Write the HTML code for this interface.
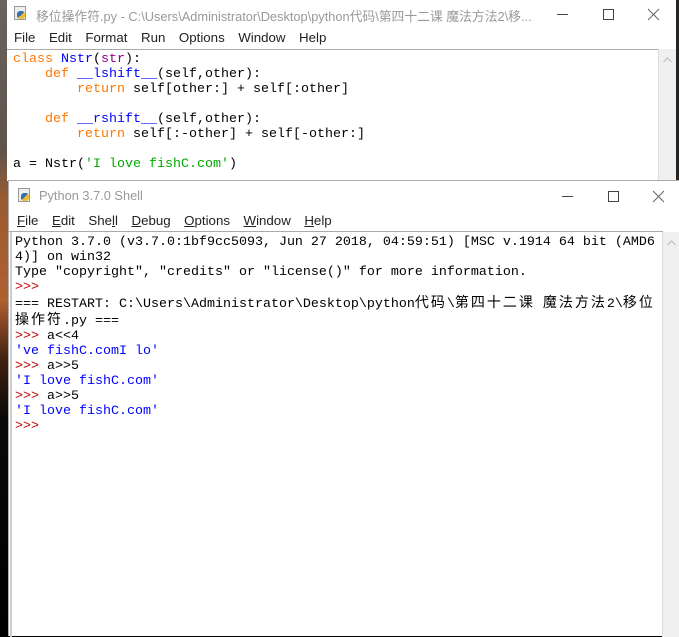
<!DOCTYPE html>
<html><head><meta charset="utf-8"><style>
*{margin:0;padding:0;box-sizing:border-box}
body{width:679px;height:636px;position:relative;overflow:hidden;background:#000;font-family:"Liberation Sans","Noto Sans CJK SC",sans-serif}
.desk{position:absolute;left:0;top:0;width:8px;height:636px;background:linear-gradient(#6a625c 0,#5e544c 150px,#9a5a30 200px,#b06030 300px,#402010 360px,#080808 420px,#000 636px)}
.dr{position:absolute;left:676px;top:0;width:3px;height:181px;background:#2a2420}
.w1{position:absolute;left:7px;top:0;width:669px;height:181px;background:#fff}
.w2{position:absolute;left:8px;top:180px;width:671px;height:456px;background:#fff;border-left:1px solid #aaa;border-top:1px solid #aaa}
.title{position:absolute;font-size:12.8px;color:#999;white-space:nowrap}
.menu{position:absolute;font-size:13.3px;color:#222;white-space:nowrap}
.menu span{margin-right:13.5px}
.code{position:absolute;font-family:"Liberation Mono","Noto Sans CJK SC",monospace;font-size:13.33px;line-height:15px;white-space:pre;color:#000}
.k{color:#ff7700}.d{color:#0000ff}.b{color:#900090}.s{color:#00aa00}.p{color:#c00000}.o{color:#0000ff}
.c{display:inline-block;width:16px;font-family:"Noto Sans CJK SC",sans-serif;font-size:14px;line-height:15px}
.sb{position:absolute;background:#f0f0f0;border-left:1px solid #ddd}
.icon{position:absolute;width:12px;height:14px;border:1px solid #999;background:#eee}
.icon i{position:absolute;left:2px;top:4px;width:8px;height:8px;border-radius:3px;background:linear-gradient(135deg,#3a6db0 50%,#e8c030 50%)}
svg{position:absolute}
</style></head><body>
<div class="desk"></div><div class="dr"></div>
<div class="w1">
 <div class="icon" style="left:7px;top:6px"><i></i></div>
 <div class="title" style="left:29px;top:6px">移位操作符.py - C:\Users\Administrator\Desktop\python代码\第四十二课 魔法方法2\移...</div>
 <svg style="left:550px;top:8px" width="110" height="14"><path d="M0 6.5H11" stroke="#444"/><path d="M46.5 1.5h10v10h-10z" stroke="#444" fill="none"/><path d="M91 1L102 12M102 1L91 12" stroke="#666"/></svg>
 <div class="menu" style="left:7px;top:30px"><span>File</span><span>Edit</span><span>Format</span><span>Run</span><span>Options</span><span>Window</span><span>Help</span></div>
 <div style="position:absolute;left:0;top:49px;width:651px;height:1px;background:#aaa"></div>
 <div class="sb" style="left:651px;top:49px;width:18px;height:132px"><svg style="left:4px;top:8px" width="9" height="6"><path d="M0.5 5L4.5 1L8.5 5" stroke="#bbb" fill="none"/></svg></div>
 <div class="code" style="left:6px;top:52px"><span class="k">class</span> <span class="d">Nstr</span>(<span class="b">str</span>):
    <span class="k">def</span> <span class="d">__lshift__</span>(self,other):
        <span class="k">return</span> self[other:] + self[:other]

    <span class="k">def</span> <span class="d">__rshift__</span>(self,other):
        <span class="k">return</span> self[:-other] + self[-other:]

a = Nstr(<span class="s">'I love fishC.com'</span>)</div>
</div>
<div class="w2">
 <div class="icon" style="left:9px;top:7px"><i></i></div>
 <div class="title" style="left:30px;top:7px">Python 3.7.0 Shell</div>
 <svg style="left:553px;top:9px" width="110" height="14"><path d="M0 6.5H11" stroke="#444"/><path d="M46.5 1.5h10v10h-10z" stroke="#444" fill="none"/><path d="M91 1L102 12M102 1L91 12" stroke="#666"/></svg>
 <div class="menu" style="left:8px;top:32px"><span><u>F</u>ile</span><span><u>E</u>dit</span><span>She<u>l</u>l</span><span><u>D</u>ebug</span><span><u>O</u>ptions</span><span><u>W</u>indow</span><span><u>H</u>elp</span></div>
 <div style="position:absolute;left:0;top:50px;width:654px;height:1px;background:#aaa"></div>
 <div style="position:absolute;left:1px;top:51px;width:2px;height:405px;background:#ccc"></div>
 <div class="sb" style="left:653px;top:51px;width:18px;height:405px"><svg style="left:4px;top:8px" width="9" height="6"><path d="M0.5 5L4.5 1L8.5 5" stroke="#bbb" fill="none"/></svg></div>
 <div class="code" style="left:6px;top:54px">Python 3.7.0 (v3.7.0:1bf9cc5093, Jun 27 2018, 04:59:51) [MSC v.1914 64 bit (AMD6
4)] on win32
Type "copyright", "credits" or "license()" for more information.
<span class="p">&gt;&gt;&gt;</span> 
=== RESTART: C:\Users\Administrator\Desktop\python<span class="c">代</span><span class="c">码</span>\<span class="c">第</span><span class="c">四</span><span class="c">十</span><span class="c">二</span><span class="c">课</span> <span class="c">魔</span><span class="c">法</span><span class="c">方</span><span class="c">法</span>2\<span class="c">移</span><span class="c">位</span>
<span class="c">操</span><span class="c">作</span><span class="c">符</span>.py ===
<span class="p">&gt;&gt;&gt;</span> a&lt;&lt;4
<span class="o">'ve fishC.comI lo'</span>
<span class="p">&gt;&gt;&gt;</span> a&gt;&gt;5
<span class="o">'I love fishC.com'</span>
<span class="p">&gt;&gt;&gt;</span> a&gt;&gt;5
<span class="o">'I love fishC.com'</span>
<span class="p">&gt;&gt;&gt;</span> </div>
</div>
</body></html>
